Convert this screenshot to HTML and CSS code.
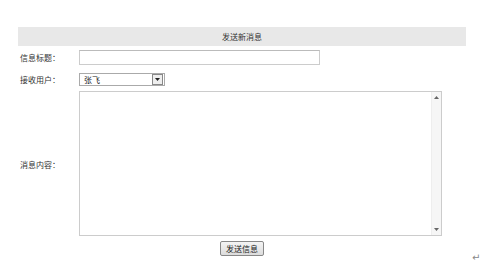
FILE: index.html
```html
<!DOCTYPE html>
<html>
<head>
<meta charset="utf-8">
<link rel="stylesheet" href="styles.css">
</head>
<body>
<div class="page">
  <div class="header">发送新消息</div>
  <div class="form">
    <div class="label">信息标题：</div>
    <div class="field"><div class="text-input"></div></div>
    <div class="label">接收用户：</div>
    <div class="field">
      <div class="select">
        <span class="select-value">张飞</span>
        <span class="select-btn"><svg width="5" height="3" viewBox="0 0 5 3"><path d="M0 0H5L2.5 3Z" fill="#222"/></svg></span>
      </div>
    </div>
    <div class="label">消息内容：</div>
    <div class="field tall">
      <div class="textarea">
        <div class="scroll">
          <span class="arrow"><svg width="5" height="3" viewBox="0 0 5 3"><path d="M0 3H5L2.5 0Z" fill="#666"/></svg></span>
          <span class="arrow"><svg width="5" height="3" viewBox="0 0 5 3"><path d="M0 0H5L2.5 3Z" fill="#666"/></svg></span>
        </div>
      </div>
    </div>
  </div>
  <div class="actions"><span class="button">发送信息</span></div>
</div>
<span class="return">↵</span>
</body>
</html>
```
FILE: styles.css
```css
html, body {
  margin: 0;
  padding: 0;
  background: #fff;
  width: 500px;
  height: 269px;
  overflow: hidden;
  font-family: "Noto Sans CJK SC", "Noto Sans", sans-serif;
  font-size: 8px;
  color: #222;
}
.page {
  position: relative;
  margin-left: 18px;
  padding-top: 27px;
  width: 448px;
}
.header {
  background: #e8e8e8;
  height: 19px;
  line-height: 19px;
  text-align: center;
  color: #333;
}
.form {
  display: grid;
  grid-template-columns: 61px 1fr;
  grid-template-rows: 19px 24px 146px;
  padding-top: 2px;
}
.label {
  padding-left: 2px;
  display: flex;
  align-items: center;
  color: #333;
}
.field {
  display: flex;
  align-items: center;
}
.field.tall {
  align-items: flex-start;
}
.text-input {
  width: 239px;
  height: 13px;
  border: 1px solid #ccc;
  border-top-color: #bbb;
  background: #fff;
}
.select {
  width: 86px;
  height: 13px;
  border: 1px solid #aaa;
  display: flex;
  align-items: center;
  justify-content: space-between;
  box-sizing: border-box;
}
.select-value {
  padding-left: 4px;
  line-height: 11px;
  color: #222;
}
.select-btn {
  width: 9px;
  height: 9px;
  margin-right: 1px;
  border: 1px solid #888;
  background: #eee;
  display: flex;
  align-items: center;
  justify-content: center;
}
.textarea {
  width: 363px;
  height: 145px;
  border: 1px solid #ccc;
  box-sizing: border-box;
  display: flex;
  justify-content: flex-end;
  background: #fff;
}
.scroll {
  width: 9px;
  border-left: 1px solid #eee;
  background: #f6f6f6;
  display: flex;
  flex-direction: column;
  justify-content: space-between;
  align-items: center;
  padding: 4px 0;
}
.arrow {
  display: flex;
}
.actions {
  display: flex;
  justify-content: center;
  padding-top: 4px;
}
.button {
  display: inline-block;
  width: 42px;
  height: 13px;
  line-height: 13px;
  text-align: center;
  border: 1px solid #888;
  border-radius: 2px;
  background: linear-gradient(#f4f4f4, #dcdcdc);
  color: #222;
}
.return {
  position: absolute;
  left: 472px;
  top: 252px;
  font-size: 10px;
  color: #888;
  font-family: "DejaVu Sans", sans-serif;
}
```
